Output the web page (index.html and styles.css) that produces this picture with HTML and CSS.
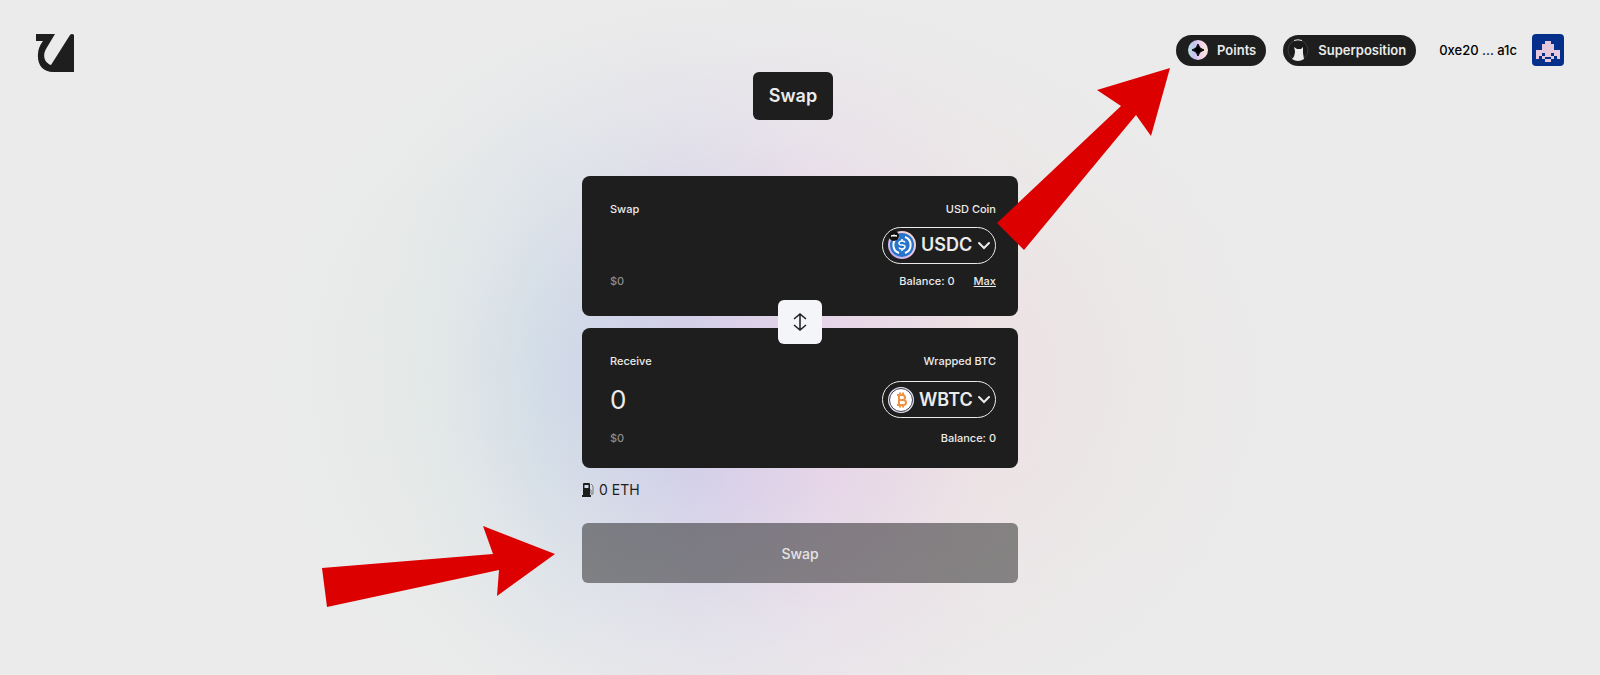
FILE: index.html
```html
<!DOCTYPE html>
<html lang="en">
<head>
  <meta charset="utf-8">
  <meta name="viewport" content="width=device-width, initial-scale=1.0">
  <title>Swap</title>
  <link rel="stylesheet" href="styles.css">
</head>
<body>
  <header class="header">
    <a href="#" class="logo" aria-label="Home">
      <svg width="38" height="38" viewBox="0 0 38 38">
        <path fill="#1e1e1e" d="M0 0H19L10 15C6 22 9 29 15 31L34 1Q36 -1 38 1V38H17C7 38 1 31 2 20C2 15 4 11 7 7H0Z"/>
      </svg>
    </a>
    <div class="account">
      <button class="pill points" type="button">
        <svg width="20" height="20" viewBox="0 0 20 20">
          <defs>
            <linearGradient id="holo" x1="0" x2="1" y1="0" y2="0">
              <stop offset="0" stop-color="#b9e4e0"/>
              <stop offset=".3" stop-color="#c3c0f0"/>
              <stop offset=".6" stop-color="#f0d0ea"/>
              <stop offset="1" stop-color="#fbe9dc"/>
            </linearGradient>
          </defs>
          <circle cx="10" cy="10" r="10" fill="url(#holo)"/>
          <path d="M10 4Q11 9 16 10Q11 11 10 16Q9 11 4 10Q9 9 10 4Z" fill="#000" stroke="#000"/>
        </svg>
        Points
      </button>
      <button class="pill network" type="button">
        <svg width="22" height="22" viewBox="0 0 22 22">
          <circle cx="11" cy="11" r="10" fill="#1a1a1a" stroke="#3d3d3d"/>
          <path d="M7 1.500Q11 0 15 1.500" stroke="#ddd" fill="none"/>
          <path d="M7 8L10 10H14L16 8V14L17 20Q11 24 5 20Q8 17 8 12Z" fill="#ebebeb"/>
        </svg>
        Superposition
      </button>
      <button class="wallet" type="button">
        0xe20 ... a1c
        <svg class="avatar" width="32" height="32" viewBox="0 0 32 32">
          <rect width="32" height="32" rx="4" fill="#04308c"/>
          <path fill="#e6c8dc" fill-rule="evenodd" d="M13 7H19V10H22V16H28V25H25V22H22V25H19V28H13V25H10V22H7V25H4V16H10V10H13ZM10 19V22H13V19ZM19 19V22H22V19ZM13 23V25H19V23Z"/>
        </svg>
      </button>
    </div>
  </header>

  <main class="main">
    <nav class="tabs">
      <a href="#" class="tab">Swap</a>
    </nav>

    <form class="swap">
      <section class="panel">
        <div class="row">
          <label for="amount-in">Swap</label>
          <span>USD Coin</span>
        </div>
        <div class="row">
          <input class="amount" id="amount-in" type="text" inputmode="decimal">
          <label class="token">
            <svg width="28" height="28" viewBox="0 0 28 28">
              <defs>
                <linearGradient id="ring" x1="0" x2="1" y1="1" y2="0">
                  <stop offset="0" stop-color="#a9a0ee"/>
                  <stop offset=".5" stop-color="#f0c4e4"/>
                  <stop offset="1" stop-color="#f8d8cc"/>
                </linearGradient>
              </defs>
              <circle cx="14" cy="14" r="14" fill="url(#ring)"/>
              <circle cx="14" cy="14" r="12" fill="#2775ca"/>
              <path d="M11 6A8.500 8.500 0 0 0 11 22M17 6A8.500 8.500 0 0 1 17 22" fill="none" stroke="#fff" stroke-width="2"/>
              <path d="M17 11.500Q16.500 10 14 10T11 12T14 14T17 16T14 18T11 16.500M14 8V10M14 18V20" fill="none" stroke="#fff" stroke-width="1.500"/>
              <circle cx="6" cy="5" r="5" fill="#111"/>
              <path d="M3 5Q6 3 9 5Z" fill="#fff" stroke="#fff"/>
            </svg>
            <select aria-label="Token to swap">
              <option>USDC</option>
            </select>
            <svg class="chevron" width="12" height="9" viewBox="0 0 12 9">
              <path d="M1 2L6 7L11 2"/>
            </svg>
          </label>
        </div>
        <div class="row">
          <span class="fiat">$0</span>
          <span class="balance">Balance: 0 <button class="max" type="button">Max</button></span>
        </div>
      </section>

      <button class="flip" type="button" aria-label="Switch tokens">
        <svg width="14" height="20" viewBox="0 0 14 20">
          <path d="M7 2V18M1 7L7 2L13 7M1 13L7 18L13 13"/>
        </svg>
      </button>

      <section class="panel receive">
        <div class="row">
          <label for="amount-out">Receive</label>
          <span>Wrapped BTC</span>
        </div>
        <div class="row">
          <input class="amount" id="amount-out" type="text" value="0" readonly>
          <label class="token">
            <svg width="26" height="26" viewBox="0 0 26 26">
              <circle cx="13" cy="13" r="13" fill="#e8e8f2"/>
              <circle cx="13" cy="13" r="11.500" fill="#fff" stroke="#3b3654"/>
              <path d="M9 8H14.500Q17 8 17 10.500T14.500 13H11H15Q18 13 18 15.500T15 18H9M11 8V18M12 5.500V8M15 5.500V8M12 18V20.500M15 18V20.500" fill="none" stroke="#f09242" stroke-width="2"/>
            </svg>
            <select aria-label="Token to receive">
              <option>WBTC</option>
            </select>
            <svg class="chevron" width="12" height="9" viewBox="0 0 12 9">
              <path d="M1 2L6 7L11 2"/>
            </svg>
          </label>
        </div>
        <div class="row">
          <span class="fiat">$0</span>
          <span class="balance">Balance: 0</span>
        </div>
      </section>

      <p class="gas">
        <svg width="12" height="14" viewBox="0 0 12 14">
          <path fill="#1e1e1e" fill-rule="evenodd" d="M1 1Q1 0 2 0H7Q8 0 8 1V12H9V14H0V12H1ZM2.500 2V5H6.500V2Z"/>
          <path d="M9 1L11 3V10Q11 11.500 10 11.500T9 10V7H8" fill="none" stroke="#777"/>
        </svg>
        0 ETH
      </p>

      <button class="submit" type="submit" disabled>Swap</button>

      <!-- pointers over the page -->
      <svg class="arrow arrow-points" width="173" height="182" viewBox="0 0 173 182">
        <path d="M0 155L124 38L100 22L173 0L154 68L139 47L27 182Z"/>
      </svg>
      <svg class="arrow arrow-submit" width="233" height="81" viewBox="0 0 233 81">
        <path d="M0 42L171 28L161 0L233 28L175 70L177 44L5 81Z"/>
      </svg>
    </form>
  </main>
</body>
</html>
```
FILE: styles.css
```css
* {
  box-sizing: border-box;
}
body {
  margin: 0;
  min-height: 100vh;
  font-family: Inter, "Liberation Sans", sans-serif;
  font-size: 11px;
  line-height: 16px;
  color: #1e1e1e;
  background:
    radial-gradient(ellipse 600px 390px at 49% 56%, rgba(235, 235, 235, 0) 0%, rgba(235, 235, 235, 0.1) 30%, rgba(235, 235, 235, 0.6) 60%, rgba(235, 235, 235, 0.9) 85%, #ebebeb 100%),
    linear-gradient(88deg, #ebebeb 12%, #dae6e3 26%, #c9d7e6 34%, #d1cde8 43%, #e5d3e8 51%, #eddfe2 61%, #ebe4e2 72%, #ebebeb 85%);
}
button, input, select {
  font-family: inherit;
  color: inherit;
  border: none;
  background: none;
  padding: 0;
}
button {
  cursor: pointer;
}
svg {
  display: block;
  flex: none;
}

/* header */
.header {
  display: flex;
  justify-content: space-between;
  align-items: flex-start;
  padding: 34px 36px 0;
}
.account {
  display: flex;
  align-items: center;
}
.pill {
  display: flex;
  align-items: center;
  height: 31px;
  border-radius: 16px;
  background: #1e1e1e;
  color: #ebebeb;
  font-size: 13px;
  font-weight: 600;
}
.points {
  gap: 9px;
  padding: 0 10px 0 12px;
  margin-right: 17px;
}
.network {
  gap: 9px;
  padding: 0 10px 0 4px;
  margin-right: 23px;
}
.wallet {
  display: flex;
  align-items: center;
  gap: 15px;
  font-size: 13px;
  font-weight: 500;
  color: #000;
}

/* swap form */
.main {
  display: flex;
  flex-direction: column;
  align-items: center;
}
.tabs {
  padding-right: 14px;
}
.tab {
  display: block;
  padding: 12px 16px;
  border-radius: 6px;
  background: #1e1e1e;
  color: #ebebeb;
  font-size: 18px;
  font-weight: 600;
  line-height: 24px;
  text-decoration: none;
}
.swap {
  position: relative;
  width: 100%;
  max-width: 436px;
  margin-top: 56px;
  display: flex;
  flex-direction: column;
}
.panel {
  display: flex;
  flex-direction: column;
  justify-content: space-between;
  height: 140px;
  padding: 25px 22px 27px 28px;
  border-radius: 8px;
  background: #1e1e1e;
  color: #ebebeb;
  font-weight: 500;
}
.receive {
  padding-bottom: 22px;
}
.row {
  display: flex;
  justify-content: space-between;
  align-items: center;
}
.amount {
  flex: 1;
  min-width: 0;
  font-size: 26px;
  height: 34px;
  outline: none;
}
.token {
  display: flex;
  align-items: center;
  gap: 5px;
  height: 37px;
  padding: 0 5px;
  border: 1px solid #ebebeb;
  border-radius: 19px;
}
.token select {
  appearance: none;
  font-size: 18px;
  font-weight: 600;
  line-height: 24px;
  cursor: pointer;
}
.chevron {
  fill: none;
  stroke: #ebebeb;
  stroke-width: 2;
  stroke-linecap: round;
}
.fiat {
  color: #8c8c8c;
}
.balance {
  display: flex;
  gap: 19px;
}
.max {
  font-size: 11px;
  font-weight: 500;
  line-height: 16px;
  text-decoration: underline;
}
.flip {
  display: flex;
  align-items: center;
  justify-content: center;
  align-self: center;
  z-index: 1;
  width: 44px;
  height: 44px;
  margin: -16px 0;
  border-radius: 6px;
  background: #f4f5f8;
}
.flip path {
  fill: none;
  stroke: #1e1e1e;
  stroke-width: 1.5;
}
.gas {
  display: flex;
  align-items: center;
  gap: 5px;
  margin: 14px 0 25px;
  font-size: 14px;
}
.submit {
  height: 60px;
  border-radius: 6px;
  background: rgba(30, 30, 30, 0.5);
  color: #e4e4e6;
  font-size: 14px;
  font-weight: 500;
  cursor: default;
}

.arrow {
  position: absolute;
  z-index: 2;
  fill: #dc0000;
  pointer-events: none;
}
.arrow-points {
  left: 415px;
  top: -108px;
}
.arrow-submit {
  right: 463px;
  top: 350px;
}
```
